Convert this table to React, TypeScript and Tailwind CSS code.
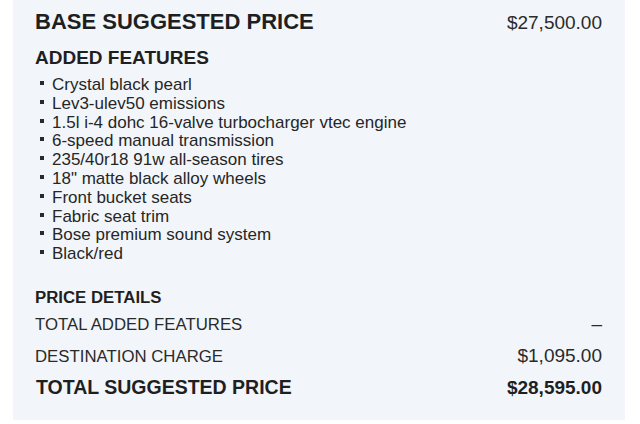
import React from "react";

const features = [
  "Crystal black pearl",
  "Lev3-ulev50 emissions",
  "1.5l i-4 dohc 16-valve turbocharger vtec engine",
  "6-speed manual transmission",
  "235/40r18 91w all-season tires",
  '18" matte black alloy wheels',
  "Front bucket seats",
  "Fabric seat trim",
  "Bose premium sound system",
  "Black/red",
];

const PriceRow: React.FC<{ label: string; value: string; className?: string }> = ({
  label,
  value,
  className,
}) => (
  <div className={"flex items-baseline justify-between " + (className ?? "")}>
    <span className="text-[16.8px] leading-[22px] text-[#2a2a2a]">{label}</span>
    <span className="text-[19px] leading-[22px] text-[#2a2a2a]">{value}</span>
  </div>
);

export default function App() {
  return (
    <div className="w-[640px] h-[424px] bg-white font-['Liberation_Sans',Arial,sans-serif]">
      <div className="ml-[13px] w-[612px] h-[420px] bg-[#f2f6fa] pl-[22px] pr-[23px] pt-[10px]">
        {/* base price */}
        <div className="flex items-baseline justify-between">
          <h2 className="text-[22px] leading-[24px] font-bold text-[#1f1f1f]">
            BASE SUGGESTED PRICE
          </h2>
          <span className="text-[19px] leading-[24px] text-[#2a2a2a]">$27,500.00</span>
        </div>

        {/* features */}
        <h3 className="mt-[12px] text-[19px] leading-[22px] font-bold text-[#1f1f1f]">
          ADDED FEATURES
        </h3>
        <ul className="mt-[7px]">
          {features.map((f) => (
            <li key={f} className="flex items-start text-[17px] leading-[18.8px] text-[#262626]">
              <span className="mt-[5px] ml-[5px] w-[4px] h-[4px] shrink-0 bg-[#2a2a2a]" />
              <span className="ml-[8px]">{f}</span>
            </li>
          ))}
        </ul>

        {/* price details */}
        <h4 className="mt-[24px] text-[16.8px] leading-[20px] font-bold text-[#1f1f1f]">
          PRICE DETAILS
        </h4>
        <PriceRow className="mt-[5px]" label="TOTAL ADDED FEATURES" value="–" />
        <PriceRow className="mt-[9px]" label="DESTINATION CHARGE" value="$1,095.00" />
        <div className="mt-[8px] flex items-baseline justify-between font-bold text-[#1f1f1f]">
          <span className="ml-[1px] text-[19.5px] leading-[22px]">TOTAL SUGGESTED PRICE</span>
          <span className="text-[19px] leading-[22px]">$28,595.00</span>
        </div>
      </div>
    </div>
  );
}
